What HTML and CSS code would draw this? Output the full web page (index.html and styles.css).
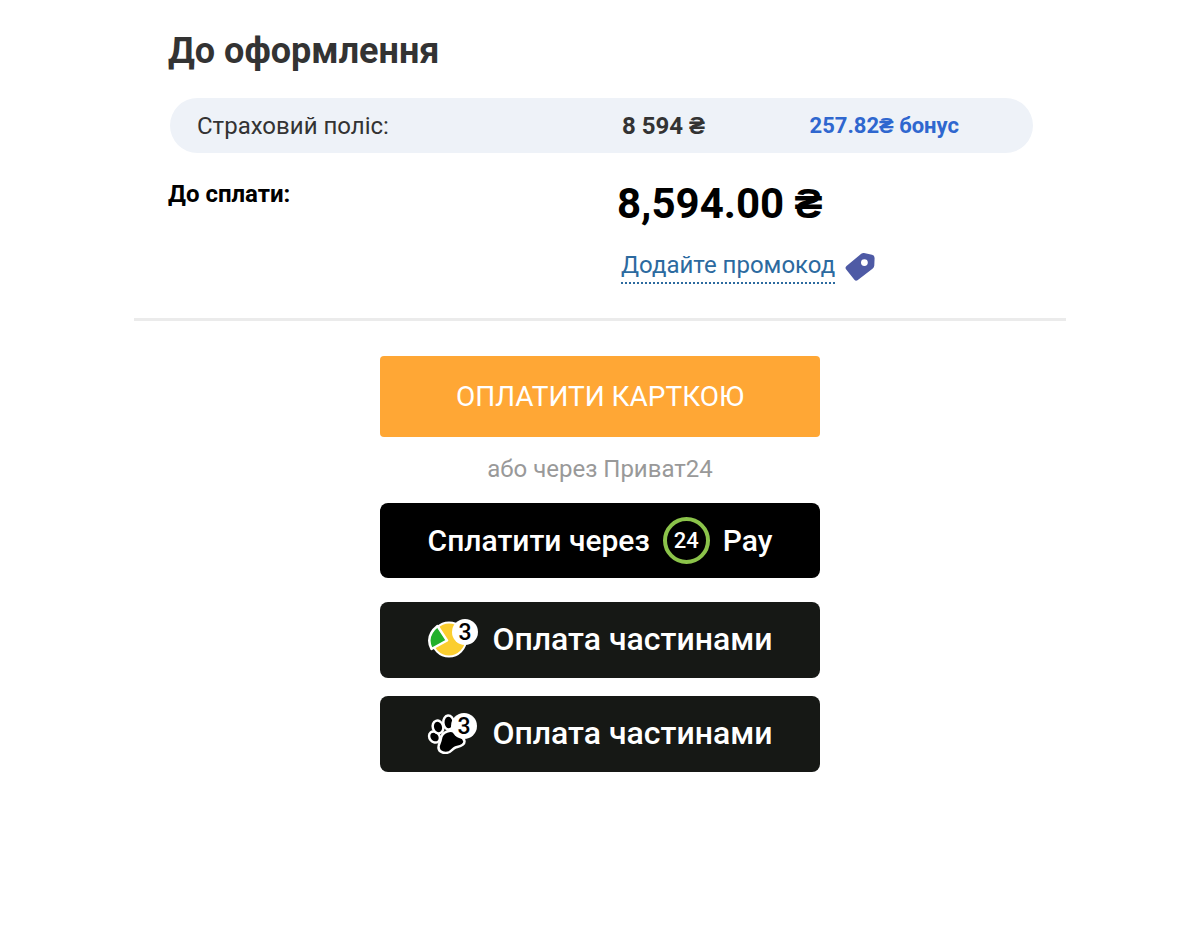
FILE: index.html
```html
<!DOCTYPE html>
<html lang="uk">
<head>
  <meta charset="UTF-8" />
  <meta name="viewport" content="width=device-width, initial-scale=1.0"/>
  <title>До оформлення</title>
  <link rel="stylesheet" href="styles.css">
</head>
<body>
  <div class="container">
    <div class="summary">
      <h1 class="summary-title">До оформлення</h1>

      <div class="summary-row policy">
        <div class="policy-name">Страховий поліс:</div>
        <div class="policy-price">8 594 ₴</div>
        <div class="policy-bonus">257.82₴ бонус</div>
      </div>

      <div class="summary-row total">
        <div class="total-label">До сплати:</div>
        <div class="total-value">
          <div class="total-price">8,594.00 ₴</div>
          <div class="promo">
            <a href="#" class="promo-link">Додайте промокод</a>
            <svg class="promo-icon" width="30" height="30" viewBox="0 0 30 30">
              <path fill="#4e5aa5" fill-rule="evenodd" d="M16.2 1.800Q17.500.9 19 1.100L27 2.800Q29.600 3.400 29.600 6L29.300 13.500Q29.200 15.400 27.500 16.700L12.500 28.200Q10.800 29.300 9.400 27.700L1 17.200Q-.2 15.400 1.500 13.900ZM19.400 7.200a3.400 3.400 0 1 0 .01 6.800a3.400 3.400 0 1 0-.01-6.800Z"/>
            </svg>
          </div>
        </div>
      </div>
    </div>

    <div class="payment">
      <button type="button" class="btn btn-card">ОПЛАТИТИ КАРТКОЮ</button>
      <div class="payment-note">або через Приват24</div>
      <button type="button" class="btn btn-pay">
        Сплатити через
        <span class="logo-24">24</span>
        Pay
      </button>
      <button type="button" class="btn btn-parts">
        <svg width="52" height="42" viewBox="0 0 52 42">
          <circle cx="22" cy="21.500" r="17" fill="#fbce2f" stroke="#fff" stroke-width="2"/>
          <path d="M10.500 8L20 22.500L4.500 31Q-2 18 10.500 8Z" fill="#22b02b" stroke="#fff" stroke-width="2.500" stroke-linejoin="round"/>
          <circle cx="38" cy="14" r="13" fill="#fff"/>
          <text class="badge-count" x="38" y="22" text-anchor="middle">3</text>
        </svg>
        Оплата частинами
      </button>
      <button type="button" class="btn btn-parts">
        <svg width="52" height="42" viewBox="0 0 52 42">
          <g fill="#000" stroke="#fff" stroke-width="2.500">
            <ellipse cx="7.500" cy="25" rx="5" ry="6" transform="rotate(-40 7.500 25)"/>
            <ellipse cx="11" cy="15" rx="5.200" ry="6.500" transform="rotate(-18 11 15)"/>
            <ellipse cx="21.500" cy="10.500" rx="5.200" ry="7" transform="rotate(-4 21.500 10.500)"/>
            <path d="M20 19.500C24 18 28 19 30.500 22C32.500 24.500 37.500 25 37.500 29.500C37.500 34 32 34.500 28.500 35.500C26 36.500 25 38.500 22.500 40C18.500 42 12 40.500 11.500 36C11.200 32.500 13.500 30.500 13.800 27C14.200 23.500 16.500 20.800 20 19.500Z"/>
          </g>
          <circle cx="37" cy="14" r="13" fill="#fff"/>
          <text class="badge-count" x="37" y="22" text-anchor="middle">3</text>
        </svg>
        Оплата частинами
      </button>
    </div>
  </div>
</body>
</html>
```
FILE: styles.css
```css
* {
  box-sizing: border-box;
}

body {
  margin: 0;
  font-family: Roboto, sans-serif;
  font-size: 24px;
  line-height: 36px;
  color: #333;
  background-color: #fff;
}

.container {
  max-width: 932px;
  margin: 0 auto;
}

.summary {
  padding: 29px 33px 34px 34px;
  border-bottom: 3px solid #ebebeb;
}

.summary-title {
  margin: 0 0 25px;
  font-size: 36px;
  line-height: 44px;
  font-weight: 700;
}

.summary-row {
  display: grid;
  grid-template-columns: 449fr 190fr 226fr;
}

.policy {
  align-items: center;
  height: 55px;
  border-radius: 28px;
  margin-left: 2px;
  background-color: #eef2f8;
}

.policy-name {
  padding-left: 27px;
}

.policy-price {
  padding-left: 4px;
  font-weight: 700;
}

.policy-bonus {
  padding-left: 2px;
  font-size: 22px;
  font-weight: 700;
  color: #2f67cf;
}

.total {
  padding-top: 23px;
  color: #000;
}

.total-label {
  font-weight: 700;
}

.total-value {
  grid-column: 2 / 4;
}

.total-price {
  font-size: 42px;
  line-height: 56px;
  font-weight: 700;
}

.promo {
  display: flex;
  align-items: center;
  gap: 10px;
  padding: 17px 0 0 4px;
}

.promo-link {
  color: #2c6a9f;
  text-decoration: none;
  border-bottom: 2px dotted #2c6a9f;
  line-height: 33px;
}

.payment {
  display: flex;
  flex-direction: column;
  max-width: 440px;
  margin: 0 auto;
  padding: 35px 0 48px;
}

.btn {
  display: flex;
  align-items: center;
  justify-content: center;
  width: 100%;
  height: 76px;
  padding: 0;
  border: none;
  border-radius: 8px;
  font-family: inherit;
  font-size: 30px;
  font-weight: 500;
  color: #fff;
  background-color: #161815;
  cursor: pointer;
}

.btn-card {
  height: 81px;
  border-radius: 4px;
  font-size: 28px;
  font-weight: 400;
  background-color: #ffa735;
}

.payment-note {
  margin: 14px 0 16px;
  text-align: center;
  color: #999;
}

.btn-pay {
  gap: 13px;
  height: 75px;
  margin-bottom: 24px;
  background-color: #000;
}

.logo-24 {
  display: flex;
  align-items: center;
  justify-content: center;
  width: 47px;
  height: 47px;
  border: 4px solid #8bc34a;
  border-radius: 50%;
  font-size: 22px;
}

.btn-parts {
  gap: 13px;
  padding-bottom: 2px;
  font-size: 32px;
}

.btn-parts + .btn-parts {
  margin-top: 18px;
}

.badge-count {
  font-size: 23px;
  font-weight: 500;
  fill: #000;
}
```
